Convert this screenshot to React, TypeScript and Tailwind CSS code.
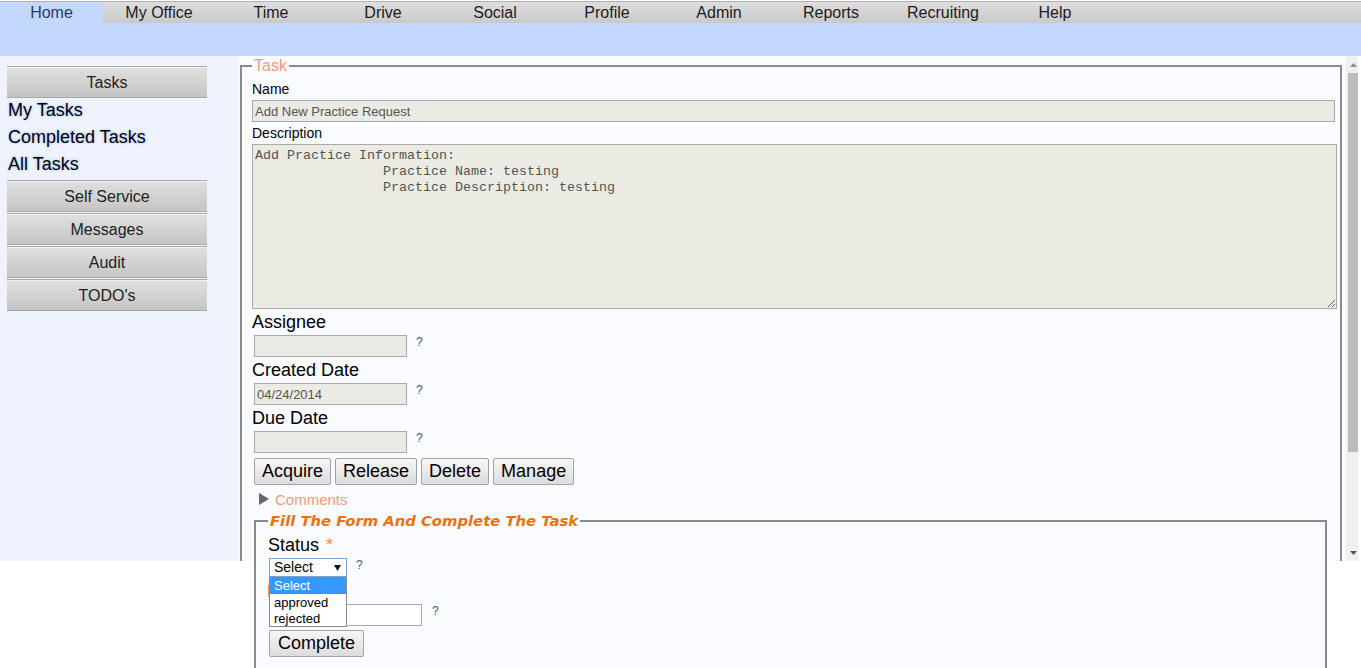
import React from 'react';

const tabs = ['Home', 'My Office', 'Time', 'Drive', 'Social', 'Profile', 'Admin', 'Reports', 'Recruiting', 'Help'];

const desc =
  'Add Practice Information:\n' +
  '                Practice Name: testing\n' +
  '                Practice Description: testing';

function Hint({ className = '' }: { className?: string }) {
  return <span className={`text-[12px] leading-[12px] text-[#4b5478] ${className}`}>?</span>;
}

function SideButton({ label }: { label: string }) {
  return (
    <div className="h-[32px] w-[200px] border-y border-[#a8a8a8] bg-linear-to-b from-[#e0e0e0] to-[#c5c5c5] text-center text-[16px] leading-[32px] text-[#222] shadow-[inset_0_1px_0_#f2f2f2]">
      {label}
    </div>
  );
}

function GrayButton({ label, className = '' }: { label: string; className?: string }) {
  return (
    <button className={`h-[27px] rounded-[2px] border border-[#a3a3a3] bg-linear-to-b from-[#f7f7f7] to-[#dcdcdc] px-[7px] text-[18px] leading-[25px] text-black ${className}`}>
      {label}
    </button>
  );
}

function DateField({ label, value = '' }: { label: string; value?: string }) {
  return (
    <>
      <div className="mt-[3px] text-[18px] leading-[20px]">{label}</div>
      <div className="mt-[3px] flex items-start">
        <input
          readOnly
          value={value}
          className="ml-[2px] h-[22px] w-[153px] border border-[#a9a9a9] bg-[#ebeae4] px-[2px] text-[13px] text-[#555] outline-none"
        />
        <Hint className="ml-[9px] mt-[1px]" />
      </div>
    </>
  );
}

export default function App() {
  return (
    <div className="h-[668px] w-[1361px] overflow-hidden bg-white font-['Liberation_Sans',Arial,sans-serif] text-black">
      {/* top menu */}
      <div className="h-[23px] bg-white pt-px">
        <div className="flex h-[22px] border-t border-[#b2b2b2] bg-linear-to-b from-[#dedede] to-[#c9c9c9]">
          {tabs.map((t, i) => (
            <div
              key={t}
              className={
                i === 0
                  ? 'w-[103px] bg-[#c4d7fd] text-center text-[16px] leading-[22px] text-[#2b3b63]'
                  : 'w-[112px] text-center text-[16px] leading-[22px] text-[#1c1c1c]'
              }
            >
              {t}
            </div>
          ))}
        </div>
      </div>
      <div className="h-[33px] bg-[#c3d6fd]" />

      <div className="flex h-[505px]">
        {/* sidebar */}
        <aside className="w-[238px] bg-[#eef3fe] pl-[7px] pt-[10px]">
          <SideButton label="Tasks" />
          <div className="-mt-px text-[18px] leading-[27px] [text-shadow:0_0_3px_#93b6ff]">
            <div className="pl-px">My Tasks</div>
            <div className="pl-px">Completed Tasks</div>
            <div className="pl-px">All Tasks</div>
          </div>
          <div className="mt-[2px] flex flex-col gap-px">
            <SideButton label="Self Service" />
            <SideButton label="Messages" />
            <SideButton label="Audit" />
            <SideButton label="TODO's" />
          </div>
        </aside>

        {/* main */}
        <main className="w-[1108px] bg-[#f9fbff] pl-[2px] pt-[2px]">
          <fieldset className="h-[503px] w-[1102px] min-w-0 border-2 border-b-0 border-[#8a8a8a] pl-[10px] pr-[4px]">
            <legend className="px-[2px] text-[16px] leading-[16px] text-[#f49a7a]">Task</legend>

            <div className="mt-[7px] text-[14px] leading-[16px]">Name</div>
            <input
              readOnly
              value="Add New Practice Request"
              className="mt-[3px] block h-[22px] w-[1083px] border border-[#a9a9a9] bg-[#ebeae4] px-[2px] text-[13px] text-[#555] outline-none"
            />
            <div className="mt-[3px] text-[14px] leading-[16px]">Description</div>
            <textarea
              readOnly
              value={desc}
              className="mt-[3px] block h-[165px] w-[1085px] border border-[#a9a9a9] bg-[#ebeae3] px-[2px] pt-[3px] font-['Liberation_Mono',monospace] text-[13.33px] leading-[16px] text-[#555] outline-none"
            />

            <div className="mt-[2px]" />
            <DateField label="Assignee" />
            <DateField label="Created Date" value="04/24/2014" />
            <DateField label="Due Date" />

            <div className="ml-[2px] mt-[5px] flex gap-[4px]">
              <GrayButton label="Acquire" />
              <GrayButton label="Release" />
              <GrayButton label="Delete" />
              <GrayButton label="Manage" />
            </div>

            <div className="ml-[7px] mt-[7px] flex h-[16px] items-center">
              <svg width="10" height="12" viewBox="0 0 10 12" className="-mt-[3px]">
                <path d="M0 0 L10 6 L0 12 Z" fill="#666" />
              </svg>
              <span className="ml-[6px] text-[15px] leading-[16px] text-[#f49a7a]">Comments</span>
            </div>

            {/* completion form */}
            <fieldset className="ml-[2px] mt-[5px] h-[160px] w-[1073px] min-w-0 border-2 border-[#8a8a8a] bg-[#f9fbff] pl-[12px]">
              <legend className="px-[2px] font-['DejaVu_Sans',sans-serif] text-[14.8px] font-bold italic leading-[16px] text-[#e8720c]">
                Fill The Form And Complete The Task
              </legend>
              <div className="mt-[6px] text-[18px] leading-[20px]">
                Status <span className="ml-[2px] text-[#f08a4b]">*</span>
              </div>
              <div className="mt-[3px] flex items-start">
                <div className="relative ml-px">
                  <div className="flex h-[19px] w-[78px] items-center border border-[#7da2ce] bg-white pl-[4px] pr-[5px] text-[14px]">
                    <span className="flex-1">Select</span>
                    <svg width="7" height="6" viewBox="0 0 7 6">
                      <path d="M0 0 L7 0 L3.5 6 Z" fill="#111" />
                    </svg>
                  </div>
                  <div className="absolute left-0 top-[19px] z-10 w-[78px] border border-t-0 border-[#8a8a8a] bg-white text-[13px]">
                    <div className="h-[17px] bg-[#3399ff] pl-[4px] leading-[17px] text-white">Select</div>
                    <div className="h-[17px] pl-[4px] leading-[17px]">approved</div>
                    <div className="h-[15px] pl-[4px] leading-[15px]">rejected</div>
                  </div>
                </div>
                <Hint className="ml-[9px] mt-[1px]" />
              </div>
              <div className="h-[27px] pt-[8px]">
                <div className="h-[12px] w-[3px] bg-[#f0a040]" />
              </div>
              <div className="flex items-start">
                <input readOnly className="ml-px h-[22px] w-[153px] border border-[#a9a9a9] bg-white outline-none" />
                <Hint className="ml-[10px] mt-[1px]" />
              </div>
              <GrayButton label="Complete" className="ml-px mt-[4px] px-[8px]" />
            </fieldset>
          </fieldset>
        </main>

        {/* scrollbar */}
        <div className="flex h-[505px] w-[12px] flex-col bg-[#f0f0f0]">
          <div className="flex h-[17px] items-center justify-center pl-[2px]">
            <svg width="7" height="4" viewBox="0 0 7 4">
              <path d="M3.5 0 L7 4 L0 4 Z" fill="#8a8a8a" />
            </svg>
          </div>
          <div className="ml-[2px] h-[379px] w-[10px] bg-[#bcbcbc]" />
          <div className="flex-1" />
          <div className="flex h-[17px] items-center justify-center pl-[2px]">
            <svg width="7" height="4" viewBox="0 0 7 4">
              <path d="M0 0 L7 0 L3.5 4 Z" fill="#555" />
            </svg>
          </div>
        </div>
        <div className="flex-1 bg-white" />
      </div>
    </div>
  );
}
